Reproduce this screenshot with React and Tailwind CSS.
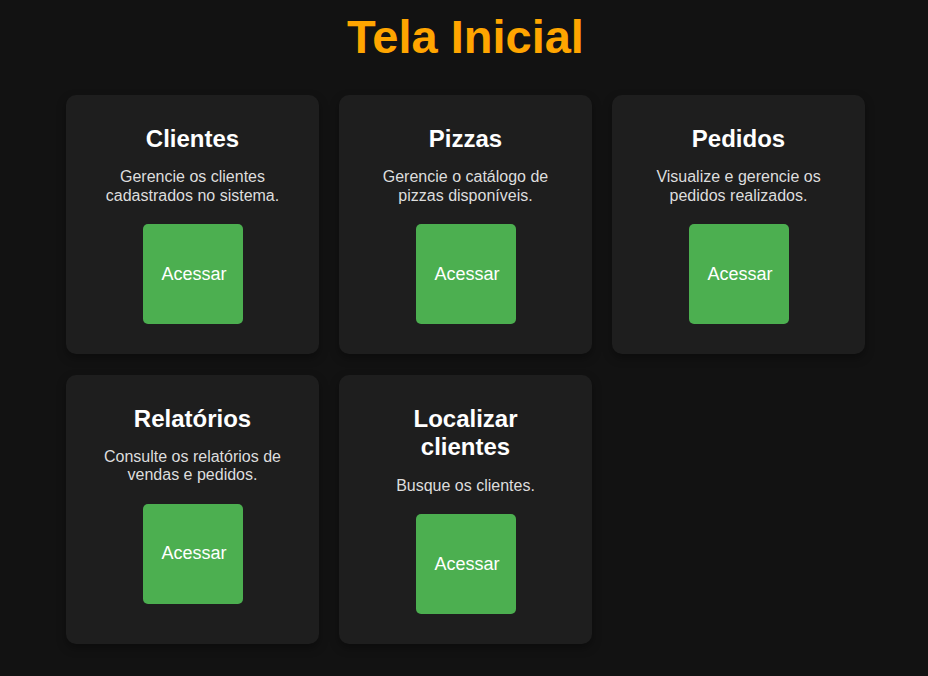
const PAGES = [
  { title: "Clientes", text: "Gerencie os clientes cadastrados no sistema." },
  { title: "Pizzas", text: "Gerencie o catálogo de pizzas disponíveis." },
  { title: "Pedidos", text: "Visualize e gerencie os pedidos realizados." },
  { title: "Relatórios", text: "Consulte os relatórios de vendas e pedidos." },
  { title: "Localizar clientes", text: "Busque os clientes." },
];

export default function App() {
  return (
    <div className="min-h-[676px] bg-[#121212] font-['Liberation_Sans',Arial,sans-serif] text-white">
      <h1 className="pt-[9px] pl-[3px] text-center text-[47px] leading-[55px] font-bold text-[#ffa500]">
        Tela Inicial
      </h1>

      {/* Menu cards */}
      <div className="mt-[31px] grid grid-cols-[repeat(3,253px)] gap-x-5 gap-y-[21px] pl-[66px]">
        {PAGES.map((p) => (
          <Card key={p.title} {...p} />
        ))}
      </div>
    </div>
  );
}

function Card({ title, text }) {
  return (
    <div className="flex flex-col items-center rounded-[10px] bg-[#1e1e1e] px-[31px] pt-[30px] pb-[29.5px] text-center shadow-[0_4px_10px_rgba(0,0,0,0.35)]">
      <h2 className="text-[24px] leading-[28.8px] font-bold">{title}</h2>
      <p className="mt-[14.5px] text-[16px] leading-[18.4px] text-[#dddddd]">{text}</p>
      <button className="mt-[19px] flex h-[100px] w-[100px] items-center justify-center rounded-[5px] bg-[#4caf50] pl-[3px] text-[18px] text-white">
        Acessar
      </button>
    </div>
  );
}
